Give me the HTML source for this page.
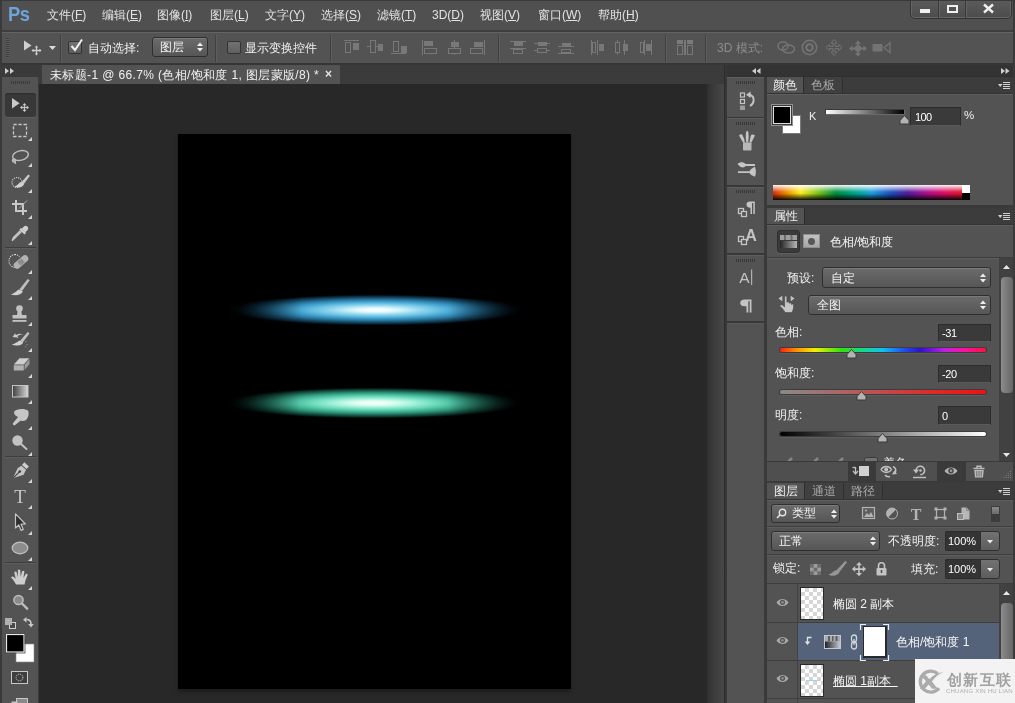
<!DOCTYPE html>
<html lang="zh">
<head>
<meta charset="utf-8">
<title>Photoshop</title>
<style>
*{box-sizing:border-box;margin:0;padding:0}
html,body{width:1015px;height:703px;overflow:hidden;background:#535353}
body{font-family:"Liberation Sans",sans-serif;font-size:12px;color:#e6e6e6;position:relative}
.a{position:absolute}
.t,.g,#tools,#stripicons,#filtericons{will-change:opacity}
.g{display:block;width:100%;height:100%}
.t{position:absolute;white-space:nowrap;line-height:14px;color:#e2e2e2}
svg{position:absolute;overflow:visible}
/* ---------- frame ---------- */
#menubar{left:0;top:0;width:1015px;height:32px;background:#505050;border-bottom:2px solid #3e3e3e}
#optbar{left:2px;top:32px;width:1012px;height:33px;background:#535353;border-top:1px solid #646464;border-bottom:2px solid #363636}
.vsep{position:absolute;top:35px;width:2px;height:27px;border-left:1px solid #3f3f3f;border-right:1px solid #5e5e5e}
.drop{position:absolute;border:1px solid #2f2f2f;border-radius:3px;background:linear-gradient(#6b6b6b,#565656);box-shadow:inset 0 1px 0 #7a7a7a}
.inp{position:absolute;background:#3a3a3a;border:1px solid #2c2c2c;border-bottom-color:#5a5a5a}
.grip{background:repeating-linear-gradient(90deg,#383838 0 1px,#535353 1px 2px)}
.chk{border:1px solid #2a2a2a;background-color:#fff;background-image:linear-gradient(45deg,#d6d6d6 25%,transparent 25%,transparent 75%,#d6d6d6 75%),linear-gradient(45deg,#d6d6d6 25%,transparent 25%,transparent 75%,#d6d6d6 75%);background-size:8px 8px;background-position:0 0,4px 4px}
.glow{-webkit-mask-image:linear-gradient(90deg,rgba(0,0,0,0) 3%,rgba(0,0,0,.55) 14%,#000 27%,#000 73%,rgba(0,0,0,.55) 86%,rgba(0,0,0,0) 97%);mask-image:linear-gradient(90deg,rgba(0,0,0,0) 3%,rgba(0,0,0,.55) 14%,#000 27%,#000 73%,rgba(0,0,0,.55) 86%,rgba(0,0,0,0) 97%)}
.tabrow{position:absolute;background:#3c3c3c;border-bottom:1px solid #333}
.tab{position:absolute;top:0;height:100%;background:#3c3c3c;border-right:1px solid #2e2e2e;color:#a8a8a8;text-align:center;line-height:16px;font-size:12px}
.tab.on{background:#535353;color:#f0f0f0}
</style>
</head>
<body>
<!-- window edges -->
<div class="a" style="left:0;top:0;width:2px;height:703px;background:#3a3a3a;z-index:50"></div>
<div class="a" style="left:1013px;top:0;width:2px;height:703px;background:#3a3a3a;z-index:50"></div>

<div class="a" style="left:0;top:0;width:1015px;height:1px;background:#3a3a3a;z-index:40"></div>
<!-- ================= MENU BAR ================= -->
<div id="menubar" class="a"></div>
<div class="t" style="left:8px;top:2px;font-size:21px;line-height:24px;font-weight:bold;color:#6ea4d8;letter-spacing:-0.5px;transform:scaleX(.875);transform-origin:0 0">Ps</div>
<div class="t" style="left:47px;top:8px">文件(<u>F</u>)</div>
<div class="t" style="left:102px;top:8px">编辑(<u>E</u>)</div>
<div class="t" style="left:157px;top:8px">图像(<u>I</u>)</div>
<div class="t" style="left:210px;top:8px">图层(<u>L</u>)</div>
<div class="t" style="left:265px;top:8px">文字(<u>Y</u>)</div>
<div class="t" style="left:321px;top:8px">选择(<u>S</u>)</div>
<div class="t" style="left:377px;top:8px">滤镜(<u>T</u>)</div>
<div class="t" style="left:432px;top:8px">3D(<u>D</u>)</div>
<div class="t" style="left:480px;top:8px">视图(<u>V</u>)</div>
<div class="t" style="left:538px;top:8px">窗口(<u>W</u>)</div>
<div class="t" style="left:598px;top:8px">帮助(<u>H</u>)</div>
<!-- window buttons -->
<div class="a" id="winbtn" style="left:910px;top:-2px;width:102px;height:21px;border:1px solid #333;border-radius:0 0 5px 5px;background:linear-gradient(#5c5c5c,#4c4c4c);box-shadow:inset 0 0 0 1px #666"></div>
<div class="a" style="left:938px;top:0;width:1px;height:18px;background:#3a3a3a"></div>
<div class="a" style="left:939px;top:0;width:1px;height:18px;background:#636363"></div>
<div class="a" style="left:965px;top:0;width:1px;height:18px;background:#3a3a3a"></div>
<div class="a" style="left:966px;top:0;width:1px;height:18px;background:#636363"></div>
<div class="a" style="left:920px;top:9px;width:10px;height:4px;background:#efefef"></div>
<div class="a" style="left:947px;top:5px;width:11px;height:8px;border:2px solid #efefef"></div>
<svg style="left:983px;top:4px" width="11" height="9" viewBox="0 0 11 9"><path d="M1 0.5 L10 8.5 M10 0.5 L1 8.5" stroke="#efefef" stroke-width="2.4" fill="none"/></svg>

<!-- ================= OPTIONS BAR ================= -->
<div id="optbar" class="a"></div>
<!-- grip -->
<div class="a" style="left:6px;top:38px;width:3px;height:20px;background:repeating-linear-gradient(#3d3d3d 0 1px,#5c5c5c 1px 2px)"></div>
<!-- move tool icon -->
<svg style="left:23px;top:40px" width="20" height="15" viewBox="0 0 20 15"><path d="M1 0.5 L1 10.5 L8.5 5.5 Z" fill="#cfcfcf"/><path d="M13.5 6.5v8M9.5 10.5h8" stroke="#cfcfcf" stroke-width="1.3" fill="none"/><path d="M13.5 5.5l-1.7 2h3.4zM13.5 15.5l-1.7-2h3.4zM8.5 10.5l2-1.7v3.4zM18.5 10.5l-2-1.7v3.4z" fill="#cfcfcf"/></svg>
<svg style="left:49px;top:46px" width="7" height="4" viewBox="0 0 7 4"><path d="M0 0h7l-3.5 4z" fill="#dcdcdc"/></svg>
<div class="vsep" style="left:60px"></div>
<!-- checkbox checked -->
<div class="a" style="left:68px;top:41px;width:14px;height:13px;border:1px solid #333;border-radius:2px;background:linear-gradient(#727272,#5c5c5c)"></div>
<svg style="left:69px;top:38px" width="15" height="15" viewBox="0 0 15 15"><path d="M2.5 8 L6 12 L13 1.5" stroke="#f0f0f0" stroke-width="2" fill="none"/></svg>
<div class="t" style="left:88px;top:41px;color:#f0f0f0">自动选择:</div>
<div class="drop" style="left:152px;top:37px;width:56px;height:20px"></div>
<div class="t" style="left:160px;top:40px;color:#f4f4f4">图层</div>
<svg style="left:197px;top:42px" width="6" height="10" viewBox="0 0 6 10"><path d="M0 4h6L3 0.5zM0 6h6L3 9.5z" fill="#eee"/></svg>
<div class="vsep" style="left:215px"></div>
<div class="a" style="left:227px;top:41px;width:14px;height:13px;border:1px solid #333;border-radius:2px;background:linear-gradient(#727272,#606060)"></div>
<div class="t" style="left:245px;top:41px;color:#f0f0f0">显示变换控件</div>
<div class="vsep" style="left:330px"></div>
<div class="vsep" style="left:498px"></div>
<div class="vsep" style="left:665px"></div>
<div class="vsep" style="left:705px"></div>
<div class="t" style="left:717px;top:41px;color:#8c8c8c">3D 模式:</div>
<!-- ALIGN ICONS -->
<svg style="left:0;top:0" width="1015" height="70" viewBox="0 0 1015 70" id="alignicons" shape-rendering="crispEdges">
<g fill="none" stroke="#787878" stroke-width="1">
<!-- 1 align top -->
<path d="M344 40.5h15"/><rect x="345.500" y="42.500" width="5" height="10"/><rect x="353" y="43" width="5" height="6" fill="#787878"/>
<!-- 2 align vcenter -->
<path d="M367 46.500h16"/><rect x="370.500" y="40.500" width="5" height="12" fill="#535353"/><rect x="378" y="44" width="4" height="6" fill="#787878"/>
<!-- 3 align bottom -->
<path d="M391 53.500h15"/><rect x="393.500" y="41.500" width="5" height="10"/><rect x="401" y="46" width="5" height="6" fill="#787878"/>
<!-- 4 align left -->
<path d="M422.500 40v15"/><rect x="424.500" y="41.500" width="8" height="4" fill="#787878"/><rect x="424.500" y="48.500" width="12" height="5"/>
<!-- 5 align hcenter -->
<path d="M454.500 40v15"/><rect x="451" y="42" width="7" height="4" fill="#787878"/><rect x="448.500" y="48.500" width="12" height="5" fill="#535353"/>
<!-- 6 align right -->
<path d="M484.500 40v15"/><rect x="474" y="42" width="8" height="4" fill="#787878"/><rect x="470.500" y="48.500" width="12" height="5"/>
<!-- 7 dist top -->
<path d="M510 41.500h16M510 48.500h16"/><rect x="514" y="42" width="8" height="3" fill="#787878"/><rect x="513.500" y="49.500" width="9" height="4"/>
<!-- 8 dist vcenter -->
<path d="M534 43.500h16M534 50.500h16"/><rect x="538" y="42" width="8" height="3" fill="#787878"/><rect x="537.500" y="48.500" width="9" height="4" fill="#535353"/>
<!-- 9 dist bottom -->
<path d="M558 46.500h16M558 53.500h16"/><rect x="562" y="43" width="8" height="3" fill="#787878"/><rect x="561.500" y="49.500" width="9" height="3"/>
<!-- 10 dist left -->
<path d="M591.500 40v15M597.500 40v15"/><rect x="592.500" y="42.500" width="3" height="10"/><rect x="599" y="44" width="4" height="6" fill="#787878"/>
<!-- 11 dist hcenter -->
<path d="M617.500 40v15M624.500 40v15"/><rect x="615.500" y="42.500" width="4" height="10" fill="#535353"/><rect x="623" y="44" width="4" height="6" fill="#787878"/>
<!-- 12 dist right -->
<path d="M644.500 40v15M651.500 40v15"/><rect x="640.500" y="42.500" width="3" height="10"/><rect x="646" y="44" width="4" height="6" fill="#787878"/>
<!-- 13 auto-align -->
<rect x="677.500" y="45.500" width="5" height="9"/><rect x="687.500" y="45.500" width="5" height="9"/>
<rect x="677" y="40" width="6" height="4" fill="#7a7a7a" stroke="none"/><rect x="687" y="40" width="6" height="4" fill="#7a7a7a" stroke="none"/>
<path d="M685 40v15" stroke-width="1.500"/>
</g>
</svg>
<!-- 3D icons -->
<svg style="left:774px;top:38px" width="120" height="20" viewBox="0 0 120 20">
<g fill="none" stroke="#747474" stroke-width="1.500">
<ellipse cx="9" cy="8" rx="5" ry="4"/><ellipse cx="14.500" cy="11" rx="6" ry="4"/>
<circle cx="35.500" cy="9.500" r="7.200"/><circle cx="35.500" cy="9.500" r="3.200" stroke-width="2"/>
<path d="M60 1.500l-3 3.500h2v3.500h-3.500v-2l-3.500 3 3.500 3v-2h3.500v3.500h-2l3 3.500 3-3.500h-2v-3.500h3.500v2l3.500-3-3.500-3v2h-3.500v-3.500h2z" stroke-width="1"/>
<path d="M84 4.500v12M77 10.500h14" stroke-width="1.800"/>
</g>
<g fill="#747474">
<circle cx="84" cy="10.500" r="3.300"/>
<path d="M84 2.500l-3 3.500h6zM84 18.500l-3-3.500h6zM75 10.500l3.500-3v6zM93 10.500l-3.500-3v6z"/>
<rect x="98.500" y="6" width="10" height="7.500" rx="1"/><path d="M110 9.700l6-5v10z" fill="none" stroke="#747474" stroke-width="1.300"/>
</g>
</svg>

<!-- ================= DOCUMENT AREA ================= -->
<div class="a" id="docarea" style="left:39px;top:65px;width:688px;height:638px;background:#282828"></div>
<div class="a" id="doctabbar" style="left:39px;top:65px;width:686px;height:19px;background:#3b3b3b"></div>
<div class="a" id="doctab" style="left:42px;top:65px;width:298px;height:19px;background:#535353"></div>
<div class="t" style="left:50px;top:68px;color:#f0f0f0;letter-spacing:0.360px">未标题-1 @ 66.7% (色相/饱和度 1, 图层蒙版/8) *</div>
<div class="t" style="left:325px;top:67px;color:#e4e4e4;font-size:12px;font-weight:bold">×</div>
<!-- canvas document -->
<div class="a" id="doc" style="left:178px;top:134px;width:393px;height:555px;background:#000;box-shadow:0 3px 4px rgba(0,0,0,.3)"></div>
<div class="a glow" style="left:216px;top:286px;width:320px;height:48px;background:radial-gradient(ellipse 150px 15.500px at 50% 50%,#f8ffff 0%,#eefcff 9%,#d2f2fb 17%,#98d9f0 29%,#66bfe2 42%,#3f9cc8 55%,#2a78a2 67%,#164c6a 79%,#0a2a3c 89%,#020c12 96%,rgba(0,0,0,0) 100%)"></div>
<div class="a glow" style="left:214px;top:379px;width:320px;height:48px;background:radial-gradient(ellipse 150px 15.500px at 50% 50%,#f8fffc 0%,#ecfff7 9%,#d0fbea 17%,#9cefd6 29%,#6cdabb 42%,#48b89a 55%,#2e9276 67%,#195e4c 79%,#0b342a 89%,#020f0c 96%,rgba(0,0,0,0) 100%)"></div>
<!-- vertical scrollbar -->
<div class="a" style="left:707px;top:84px;width:17px;height:619px;background:linear-gradient(90deg,#303030,#3c3c3c 40%,#474747);border-radius:3px 0 0 0"></div>
<div class="a" style="left:724px;top:65px;width:3px;height:638px;background:#373737;border-left:1px solid #2c2c2c"></div>

<!-- ================= TOOLBOX ================= -->
<div class="a" id="toolbox" style="left:2px;top:65px;width:37px;height:638px;background:#535353;border-right:1px solid #3a3a3a"></div>
<div class="a" style="left:2px;top:65px;width:37px;height:12px;background:#3a3a3a"></div>
<!-- toolbox: collapse arrows, grip, selected btn -->
<svg style="left:5px;top:68px" width="10" height="6" viewBox="0 0 10 6"><path d="M0 0l4 3-4 3zM5 0l4 3-4 3z" fill="#d0d0d0"/></svg>
<div class="a" style="left:11px;top:81px;width:19px;height:3px;background:repeating-linear-gradient(90deg,#3a3a3a 0 1px,#535353 1px 2px)"></div>
<div class="a" style="left:5px;top:93px;width:31px;height:24px;background:#383838;border-radius:3px;box-shadow:inset 0 1px 1px #2c2c2c,0 1px 0 #5e5e5e"></div>
<svg id="tools" style="left:0;top:0" width="42" height="703" viewBox="0 0 42 703">
<defs>
<linearGradient id="gr1" x1="0" y1="0" x2="1" y2="0"><stop offset="0" stop-color="#3e3e3e"/><stop offset="1" stop-color="#d8d8d8"/></linearGradient>
<pattern id="chk" width="4" height="4" patternUnits="userSpaceOnUse"><rect width="4" height="4" fill="#fff"/><rect width="2" height="2" fill="#ccc"/><rect x="2" y="2" width="2" height="2" fill="#ccc"/></pattern>
</defs>
<g fill="#c8c8c8">
<!-- flyout triangles -->
<path d="M32 137v4h-4zM32 163v4h-4zM32 189v4h-4zM32 215v4h-4zM32 241v4h-4zM32 270v4h-4zM32 296v4h-4zM32 322v4h-4zM32 348v4h-4zM32 374v4h-4zM32 400v4h-4zM32 426v4h-4zM32 452v4h-4zM32 479v4h-4zM32 505v4h-4zM32 531v4h-4zM32 557v4h-4zM32 586v4h-4z" fill="#d6d6d6"/>
<!-- move -->
<path d="M12 98v10.500l7.600-5.200z"/>
<path d="M24.500 103l2 2.300h-1.400v1.600h1.600v-1.400l2.300 2-2.300 2v-1.400h-1.600v1.600h1.400l-2 2.300-2-2.300h1.400v-1.600h-1.600v1.400l-2.300-2 2.300-2v1.400h1.600v-1.600h-1.400z"/>
</g>
<!-- marquee -->
<rect x="13.500" y="124.500" width="13" height="12" fill="none" stroke="#c8c8c8" stroke-width="1.300" stroke-dasharray="3.200 1.800"/>
<!-- lasso -->
<g fill="none" stroke="#bebebe" stroke-width="1.450">
<ellipse cx="20.500" cy="155.500" rx="8" ry="4.800" transform="rotate(-14 20.500 155.500)"/>
<path d="M13.500 159.500c0.500 2 2 2.500 2 4.500" stroke-width="1.500"/>
<circle cx="14" cy="160.500" r="1.600" stroke-width="1.200"/>
</g>
<!-- quick select -->
<circle cx="17" cy="182.500" r="5" fill="none" stroke="#dadada" stroke-width="1.100" stroke-dasharray="1.100 1.100"/>
<path d="M30 175.800l-1.800-1.300-6.800 7.800 2.300 1.900z" fill="#c8c8c8"/>
<path d="M21 182c-2.200 0.700-2.800 3.200-6.800 4.600 3.400 1.900 8.600 1 10-2.600z" fill="#d2d2d2"/>
<!-- crop -->
<g fill="none" stroke="#c8c8c8" stroke-width="2">
<path d="M16 200v11h11M12 204h11v11"/>
</g>
<path d="M27 200.500l-8 8" stroke="#b0b0b0" stroke-width="1" fill="none"/>
<!-- eyedropper -->
<g>
<path d="M24.200 226.200a2.600 2.600 0 0 1 3.600 3.600l-2.600 2.600-3.600-3.600z" fill="#d0d0d0"/>
<path d="M20.200 228.800l5 5" stroke="#d0d0d0" stroke-width="2.200"/>
<path d="M21.500 231.500l-7.200 7.200-1.600 0.600 0.600-1.600 7.200-7.200" fill="none" stroke="#c8c8c8" stroke-width="1.300"/>
<path d="M12.200 240.800l1.500-2" stroke="#c8c8c8" stroke-width="1.200"/>
</g>
<!-- sep1 -->
<path d="M5 247.500h31" stroke="#3d3d3d" stroke-width="1"/><path d="M5 248.500h31" stroke="#5d5d5d" stroke-width="1"/>
<!-- healing brush -->
<path d="M15 254.500a6 6.500 0 0 0 0 13" fill="none" stroke="#dadada" stroke-width="1.100" stroke-dasharray="1.100 1.100"/>
<path d="M15 254.500a6 6.500 0 0 1 4.500 2.200" fill="none" stroke="#dadada" stroke-width="1.100" stroke-dasharray="1.100 1.100"/>
<rect x="12.500" y="258.600" width="17" height="6.800" rx="3.400" transform="rotate(-40 21 262)" fill="#b2b2b2"/>
<rect x="18.300" y="259.300" width="5.400" height="5.400" transform="rotate(-40 21 262)" fill="#8e8e8e"/>
<!-- brush -->
<path d="M29.700 280.300l-2-1.300-8.200 10.300 2.500 1.800z" fill="#c0c0c0"/>
<path d="M19.200 289.500c-2.400 0.600-3 3.400-8.400 4.700 3.800 2 10.400 1.200 12-2.700z" fill="#d0d0d0"/>
<!-- stamp -->
<g fill="#c2c2c2">
<circle cx="19.500" cy="308.500" r="3.300"/>
<path d="M17.800 310h3.400l0.800 5.500h-5z"/>
<rect x="12.500" y="315" width="14" height="3.600" rx="0.600"/>
<rect x="12.500" y="320" width="14" height="1.800"/>
</g>
<!-- history brush -->
<path d="M29.600 333.300l-1.900-1.300-7.400 8.600 2.400 1.800z" fill="#c0c0c0"/>
<path d="M20 340.600c-2.400 0.600-3 2.800-8.400 4 3.800 1.800 10 1.200 11.600-2.200z" fill="#d0d0d0"/>
<path d="M12.500 337l2.500-3.500 1.200 1.400c2.500-1.500 5-1.500 7-0.300-2.500-0.200-4.300 0.400-5.800 1.700l1.300 1.400z" fill="#c8c8c8"/>
<path d="M26 341v1.200M27 344v1.200M25.500 346.500v0.800" stroke="#9a9a9a" stroke-width="1"/>
<!-- eraser -->
<path d="M19.500 358.200h9.800l-5.500 6.300h-10z" fill="#cdcdcd"/>
<path d="M13.800 365.300h10v5.200h-10z" fill="#b0b0b0"/>
<path d="M24.600 364.800l4.900-5.800v5l-4.900 6z" fill="#9a9a9a"/>
<!-- gradient -->
<rect x="12.500" y="385.500" width="15.500" height="11.500" fill="url(#gr1)" stroke="#c4c4c4" stroke-width="1"/>
<!-- smudge -->
<path d="M14.200 411.500c2-3 10.500-3.500 14-0.800 1 3.200 0.300 7.200-2.600 9.600-1.600 1-3.200 1-4.800 0.200l-5.600 4.600c-1.300 1-3.200-0.600-2.100-2l5-6.200c-3-1-4.500-3.200-3.900-5.400z" fill="#c6c6c6"/>
<!-- dodge -->
<circle cx="17.500" cy="440.500" r="5.200" fill="#c2c2c2"/>
<path d="M20.500 443.500l6 5.500" stroke="#c2c2c2" stroke-width="2" stroke-linecap="round"/>
<!-- sep2 -->
<path d="M5 456.500h31" stroke="#3d3d3d" stroke-width="1"/><path d="M5 457.500h31" stroke="#5d5d5d" stroke-width="1"/>
<!-- pen -->
<path d="M24.300 462.300l4.600 4.200-2.200 2.600-4.700-4.200z" fill="#cfcfcf"/>
<path d="M21.400 465.700l4.600 4.100-2.400 5-10.800 3.400 5-10.300z" fill="#c4c4c4"/>
<path d="M13.200 477.800l6.300-6" stroke="#3c3c3c" stroke-width="1.100"/>
<circle cx="19.800" cy="471.500" r="1.300" fill="#3c3c3c"/>
<!-- T -->
<text x="20" y="503.300" font-family="Liberation Serif, serif" font-size="19" text-anchor="middle" fill="#c8c8c8">T</text>
<!-- path selection arrow -->
<path d="M15.500 513.800v14.200l3.300-3 2.300 5.400 2.200-1-2.300-5.200 4.400-0.200z" fill="#2e2e2e" stroke="#c4c4c4" stroke-width="1.200" stroke-linejoin="round"/>
<!-- ellipse -->
<ellipse cx="20" cy="548" rx="7.800" ry="5.800" fill="#8c8c8c" stroke="#c4c4c4" stroke-width="1.200"/>
<!-- sep3 -->
<path d="M5 562.500h31" stroke="#3d3d3d" stroke-width="1"/><path d="M5 563.500h31" stroke="#5d5d5d" stroke-width="1"/>
<!-- hand -->
<path d="M16 584.500c-1.200-2.500-3-5-5-7 0.600-1.300 2-1.300 3-0.300l1.700 1.800-1.400-6.500c0.400-1.200 1.800-1.200 2.300-0.200l1.400 5-0.200-7c0.500-1.200 2-1.200 2.500 0l0.400 6.800 1.400-5.800c0.600-1 2-0.800 2.300 0.300l-1 6.400 2.200-3.800c0.800-0.800 2-0.300 2 0.800l-2.300 6c-0.300 1.300-0.600 2.600-0.800 3.500z" fill="#cdcdcd"/>
<!-- zoom -->
<circle cx="18.500" cy="600" r="4.600" fill="#8a8a8a" stroke="#bebebe" stroke-width="1.500"/>
<path d="M22 603.500l5.200 5.200" stroke="#bebebe" stroke-width="2.400" stroke-linecap="round"/>
<!-- default colors -->
<rect x="9.500" y="622.500" width="6" height="6" fill="#4a4a4a" stroke="#cfcfcf" stroke-width="1"/>
<rect x="5" y="618" width="7" height="7" fill="#b0b0b0"/>
<!-- swap -->
<path d="M26.500 619.500c3 0 4.500 1.500 4.500 4.500" fill="none" stroke="#c8c8c8" stroke-width="1.600"/>
<path d="M23 619.800l3.500-2.800v5.600zM31 627.500l-2.800-3.500h5.600z" fill="#c8c8c8"/>
<!-- fg/bg -->
<rect x="16" y="644" width="18" height="18" fill="#fff" stroke="#8a8a8a" stroke-width="0.600"/>
<rect x="6.500" y="634.500" width="17.500" height="17.500" fill="#000" stroke="#e8e8e8" stroke-width="1.200"/>
<rect x="5.500" y="633.500" width="19.500" height="19.500" fill="none" stroke="#4a4a4a" stroke-width="0.800"/>
<!-- quick mask -->
<rect x="11.500" y="671.500" width="16" height="12" fill="#3e3e3e" stroke="#c8c8c8" stroke-width="1"/>
<circle cx="19.500" cy="677.500" r="3.400" fill="none" stroke="#e0e0e0" stroke-width="1" stroke-dasharray="1 1"/>
<!-- screen mode -->
<rect x="16.500" y="698.500" width="11" height="8" fill="#8a8a8a" stroke="#c8c8c8" stroke-width="1"/>
<rect x="11.500" y="701.500" width="6" height="5" fill="#c8c8c8"/>
</svg>

<!-- ================= ICON STRIP ================= -->
<div class="a" id="iconstrip" style="left:727px;top:65px;width:38px;height:638px;background:#535353"></div>
<div class="a" style="left:727px;top:65px;width:288px;height:12px;background:#3a3a3a"></div>
<div class="a" style="left:764px;top:77px;width:3px;height:626px;background:#3a3a3a"></div>
<div class="a" style="left:727px;top:65px;width:286px;height:11px;background:#333"></div>
<div class="a" style="left:727px;top:76px;width:286px;height:1px;background:#2f2f2f"></div>
<!-- icon strip contents -->
<div class="a" style="left:727px;top:117px;width:37px;height:1px;background:#383838"></div>
<div class="a" style="left:727px;top:118px;width:37px;height:1px;background:#5e5e5e"></div>
<div class="a" style="left:727px;top:185px;width:37px;height:2px;background:#383838"></div>
<div class="a" style="left:727px;top:187px;width:37px;height:1px;background:#5e5e5e"></div>
<div class="a" style="left:727px;top:253px;width:37px;height:2px;background:#383838"></div>
<div class="a" style="left:727px;top:255px;width:37px;height:1px;background:#5e5e5e"></div>
<div class="a" style="left:727px;top:321px;width:37px;height:2px;background:#383838"></div>
<div class="a" style="left:727px;top:323px;width:37px;height:1px;background:#5a5a5a"></div>
<div class="a" style="left:727px;top:77px;width:37px;height:1px;background:#5e5e5e"></div>
<div class="a grip" style="left:736px;top:81px;width:19px;height:3px"></div>
<div class="a grip" style="left:736px;top:122px;width:19px;height:3px"></div>
<div class="a grip" style="left:736px;top:190px;width:19px;height:3px"></div>
<div class="a grip" style="left:736px;top:259px;width:19px;height:3px"></div>
<svg style="left:752px;top:68px" width="9" height="6" viewBox="0 0 9 6"><path d="M4 0v6l-4-3zM8.500 0v6l-4-3z" fill="#d0d0d0"/></svg>
<svg style="left:1001px;top:68px" width="9" height="6" viewBox="0 0 9 6"><path d="M0 0v6l4-3zM4.500 0v6l4-3z" fill="#d0d0d0"/></svg>
<svg id="stripicons" style="left:727px;top:65px" width="38" height="270" viewBox="727 65 38 270">
<g fill="#c4c4c4">
<!-- history -->
<rect x="740.500" y="93" width="4" height="4" fill="none" stroke="#c4c4c4" stroke-width="1.200"/>
<rect x="740.500" y="99.500" width="4" height="4" fill="none" stroke="#c4c4c4" stroke-width="1.200"/>
<rect x="740" y="105.500" width="5" height="4.500" fill="#9c9c9c"/>
<path d="M749 94.800c3.600 0.200 5 3 4.600 6-0.300 2.300-1.600 4-3.600 5.200" fill="none" stroke="#c4c4c4" stroke-width="2"/>
<path d="M746 94.800l4.600-3.400v6.600z"/>
<!-- brush presets -->
<rect x="743" y="142.500" width="8.500" height="8" rx="0.800" fill="#b8b8b8"/>
<path d="M746 132l1.200-1.200 1.200 1.200 0.300 5-0.600 5.500h-1.800l-0.600-5.500z"/>
<path d="M739 135.500c1.200-1.200 2.200-1.600 3-1.200l2.300 5 0.500 3.500h-1.600z"/>
<path d="M755 135.500c-2-1.400-3.500-1.200-4.300 0.500l-1.200 6.500h1.800z"/>
<!-- brush panel -->
<path d="M737.500 164c2-1.800 5.300-2.200 7.200-0.800l1 0.900h9.300v1.900h-9.300c-1.500 2.200-5 2.200-8.200-2z"/>
<path d="M738 171.200h11.500c0.800-2 3.500-4 5.500-4.500 1.200 3.300 1.200 6.700 0 10-2.300-0.600-4.600-2-5.500-3.600h-11.500z"/>
<!-- paragraph styles -->
<path d="M749.800 201.500h5v12.500h-1.500v-11h-1.300v11h-1.500v-6.300c-2.800 0-4-1.300-4-3.200 0-1.800 1.300-3 3.300-3z"/>
<rect x="738.500" y="208.500" width="5" height="5" fill="#535353" stroke="#c4c4c4" stroke-width="1.300"/>
<rect x="741.500" y="211.500" width="5" height="5" fill="#535353" stroke="#c4c4c4" stroke-width="1.300"/>
<!-- character styles -->
<text x="751" y="241" font-family="Liberation Sans, sans-serif" font-size="16" font-weight="bold" text-anchor="middle">A</text>
<rect x="738.500" y="236.500" width="5" height="5" fill="#535353" stroke="#c4c4c4" stroke-width="1.300"/>
<rect x="741.500" y="239.500" width="5" height="5" fill="#535353" stroke="#c4c4c4" stroke-width="1.300"/>
<!-- character -->
<text x="744.500" y="283" font-family="Liberation Sans, sans-serif" font-size="15.500" text-anchor="middle">A</text>
<rect x="751" y="269.500" width="1.200" height="15.500" fill="#b0b0b0"/>
<!-- paragraph -->
<path d="M744.500 299.500h7v13h-1.800v-11.200h-1.400v11.200h-1.800v-6.300h-2c-2.600 0-4.300-1.300-4.300-3.300 0-2 1.700-3.400 4.300-3.400z"/>
</g>
</svg>

<!-- ================= RIGHT PANELS ================= -->
<div class="a" id="rp" style="left:767px;top:77px;width:246px;height:626px;background:#535353"></div>
<!-- ===== COLOR PANEL ===== -->
<div class="tabrow" style="left:767px;top:77px;width:246px;height:17px">
  <div class="tab on" style="left:0;width:37px"><span class="g">颜色</span></div>
  <div class="tab" style="left:37px;width:39px;background:#404040"><span class="g">色板</span></div>
</div>
<svg class="pmenu" style="left:998px;top:82px" width="12" height="8" viewBox="0 0 12 8"><path d="M0 2h4.500l-2.250 3z" fill="#cfcfcf"/><path d="M5 0.500h7M5 2.500h7M5 4.500h7M5 6.500h7" stroke="#cfcfcf" stroke-width="1"/></svg>
<div class="a" style="left:767px;top:94px;width:246px;height:1px;background:#5f5f5f"></div>
<!-- fg/bg swatches -->
<div class="a" style="left:782px;top:115px;width:19px;height:19px;background:#fff;border:1px solid #7a7a7a"></div>
<div class="a" style="left:771px;top:104px;width:22px;height:22px;background:#000;border:1px solid #8f8f8f;box-shadow:inset 0 0 0 1px #3c3c3c,inset 0 0 0 2px #dcdcdc"></div>
<div class="t" style="left:809px;top:109px;color:#f0f0f0;font-size:11px">K</div>
<div class="a" style="left:825px;top:109px;width:80px;height:6px;background:linear-gradient(90deg,#fff,#000);border:1px solid #333;border-color:#3a3a3a #6a6a6a #6a6a6a #3a3a3a"></div>
<svg style="left:899px;top:115px" width="11" height="10" viewBox="0 0 11 10"><path d="M5.500 0.500l4.500 5v3.500h-9v-3.500z" fill="#b4b4b4" stroke="#3a3a3a" stroke-width="1"/></svg>
<div class="inp" style="left:910px;top:107px;width:51px;height:19px"></div>
<div class="t" style="left:915px;top:110px;color:#fff;font-size:11px;letter-spacing:-0.600px">100</div>
<div class="t" style="left:964px;top:108px;color:#f0f0f0;font-size:11.500px">%</div>
<!-- spectrum -->
<div class="a" style="left:773px;top:185px;width:197px;height:15px;background:linear-gradient(90deg,#e02a10 0%,#f0a000 8%,#ffee20 14%,#70c020 24%,#009040 32%,#00a890 42%,#20a0e0 50%,#2050c0 60%,#5020a0 68%,#b01090 78%,#e01060 88%,#e01828 96%,#e02010 100%)"></div>
<div class="a" style="left:773px;top:185px;width:197px;height:15px;background:linear-gradient(180deg,rgba(255,255,255,.95) 0%,rgba(255,255,255,0) 48%,rgba(0,0,0,0) 55%,rgba(0,0,0,.95) 100%)"></div>
<div class="a" style="left:962px;top:185px;width:8px;height:8px;background:#fff"></div>
<div class="a" style="left:962px;top:193px;width:8px;height:7px;background:#000"></div>
<div class="a" style="left:767px;top:205px;width:246px;height:3px;background:#3a3a3a"></div>

<!-- ===== PROPERTIES PANEL ===== -->
<div class="tabrow" style="left:767px;top:208px;width:246px;height:17px">
  <div class="tab on" style="left:0;width:38px"><span class="g">属性</span></div>
</div>
<svg class="pmenu" style="left:998px;top:213px" width="12" height="8" viewBox="0 0 12 8"><path d="M0 2h4.500l-2.250 3z" fill="#cfcfcf"/><path d="M5 0.500h7M5 2.500h7M5 4.500h7M5 6.500h7" stroke="#cfcfcf" stroke-width="1"/></svg>
<div class="a" style="left:767px;top:225px;width:246px;height:1px;background:#5f5f5f"></div>
<!-- adj icons -->
<div class="a" style="left:777px;top:230px;width:23px;height:23px;background:#3a3a3a;border:1px solid #303030;border-radius:3px;box-shadow:0 1px 0 #606060"></div>
<svg style="left:780px;top:235px" width="17" height="13" viewBox="0 0 17 13"><defs><linearGradient id="hs1" x1="0" y1="0" x2="1" y2="0"><stop offset="0" stop-color="#262626"/><stop offset="1" stop-color="#b4b4b4"/></linearGradient></defs><rect x="0" y="0" width="17" height="5" fill="#9e9e9e"/><rect x="4" y="0" width="2" height="5" fill="#6c6c6c"/><rect x="10.500" y="0" width="2" height="5" fill="#6c6c6c"/><rect x="0" y="6" width="17" height="7" fill="url(#hs1)"/></svg>
<div class="a" style="left:803px;top:234px;width:17px;height:14px;background:linear-gradient(#c2c2c2,#a6a6a6);border:1px solid #8e8e8e"></div>
<div class="a" style="left:808px;top:238px;width:7px;height:7px;border-radius:50%;background:#585858"></div>
<div class="t" style="left:830px;top:235px;color:#f4f4f4">色相/饱和度</div>
<div class="a" style="left:767px;top:257px;width:246px;height:1px;background:#3c3c3c"></div>
<div class="a" style="left:767px;top:258px;width:233px;height:1px;background:#5f5f5f"></div>
<!-- preset row -->
<div class="t" style="left:787px;top:271px;color:#f0f0f0">预设:</div>
<div class="drop" style="left:822px;top:267px;width:169px;height:21px"></div>
<div class="t" style="left:831px;top:271px;color:#f4f4f4">自定</div>
<svg style="left:980px;top:273px" width="6" height="10" viewBox="0 0 6 10"><path d="M0 4h6L3 0.500zM0 6h6L3 9.500z" fill="#eee"/></svg>
<!-- hand + channel -->
<svg style="left:778px;top:295px" width="18" height="19" viewBox="0 0 18 19"><path d="M0.500 3.500l3.800-2.700v5.400zM16.500 3.500l-3.800-2.700v5.400z" fill="#c6c6c6"/><path d="M6.600 2c0-1.500 2.300-1.500 2.300 0v5.300c0.500-0.900 2.200-0.800 2.300 0.300v0.700c0.500-0.800 2.100-0.700 2.200 0.400v0.800c0.600-0.700 2.100-0.500 2.200 0.500 0.200 2.600-0.400 5.200-1.700 7.600h-6.800c-1.100-2.500-3-4.700-5.400-6.700 0.600-1.400 2.200-1.500 3.200-0.500l1.700 1.500z" fill="#c6c6c6" stroke="#444" stroke-width="0.600"/></svg>
<div class="drop" style="left:808px;top:295px;width:183px;height:20px"></div>
<div class="t" style="left:817px;top:298px;color:#f4f4f4">全图</div>
<svg style="left:980px;top:300px" width="6" height="10" viewBox="0 0 6 10"><path d="M0 4h6L3 0.500zM0 6h6L3 9.500z" fill="#eee"/></svg>
<!-- hue -->
<div class="t" style="left:775px;top:325px;color:#f0f0f0">色相:</div>
<div class="inp" style="left:938px;top:324px;width:53px;height:18px"></div>
<div class="t" style="left:942px;top:326px;color:#fff;font-size:11px;letter-spacing:-0.400px">-31</div>
<div class="a" style="left:780px;top:348px;width:206px;height:3.500px;border-radius:2px;background:linear-gradient(90deg,#ff2010 0%,#ff9000 8%,#f0f000 17%,#30e010 30%,#10d8a0 42%,#10c0f0 50%,#2050f0 60%,#3010d0 68%,#c020e0 80%,#ff10a0 90%,#ff1040 100%);box-shadow:0 0 0 1px #3c3c3c,0 2px 0 0 #5e5e5e"></div>
<svg class="thumb" style="left:846px;top:349px" width="11" height="10" viewBox="0 0 11 10"><path d="M5.500 0.500l4.500 5v3.500h-9v-3.500z" fill="#b4b4b4" stroke="#3a3a3a" stroke-width="1"/></svg>
<!-- saturation -->
<div class="t" style="left:775px;top:366px;color:#f0f0f0">饱和度:</div>
<div class="inp" style="left:938px;top:365px;width:53px;height:18px"></div>
<div class="t" style="left:942px;top:367px;color:#fff;font-size:11px;letter-spacing:-0.400px">-20</div>
<div class="a" style="left:780px;top:390px;width:206px;height:3.500px;border-radius:2px;background:linear-gradient(90deg,#8a8a8a 0%,#b06060 35%,#d83030 70%,#f01010 100%);box-shadow:0 0 0 1px #3c3c3c,0 2px 0 0 #5e5e5e"></div>
<svg class="thumb" style="left:856px;top:391px" width="11" height="10" viewBox="0 0 11 10"><path d="M5.500 0.500l4.500 5v3.500h-9v-3.500z" fill="#b4b4b4" stroke="#3a3a3a" stroke-width="1"/></svg>
<!-- lightness -->
<div class="t" style="left:775px;top:408px;color:#f0f0f0">明度:</div>
<div class="inp" style="left:938px;top:406px;width:53px;height:19px"></div>
<div class="t" style="left:942px;top:409px;color:#fff;font-size:11px">0</div>
<div class="a" style="left:780px;top:432px;width:206px;height:3.500px;border-radius:2px;background:linear-gradient(90deg,#000 0%,#fff 100%);box-shadow:0 0 0 1px #3c3c3c,0 2px 0 0 #5e5e5e"></div>
<svg class="thumb" style="left:877px;top:433px" width="11" height="10" viewBox="0 0 11 10"><path d="M5.500 0.500l4.500 5v3.500h-9v-3.500z" fill="#b4b4b4" stroke="#3a3a3a" stroke-width="1"/></svg>
<!-- cut-off row (eyedroppers + colorize) -->
<div class="a" style="left:767px;top:452px;width:233px;height:9px;overflow:hidden">
  <svg style="left:16px;top:2px" width="140" height="14" viewBox="0 0 140 14"><g stroke="#868686" stroke-width="2.600" fill="none"><path d="M3 10l6-6"/><path d="M29 10l6-6"/><path d="M54 10l6-6"/></g><rect x="81.500" y="3.500" width="13" height="12" rx="2" fill="#727272" stroke="#3a3a3a"/></svg>
  <div class="t" style="left:116px;top:4px;color:#f0f0f0">着色</div>
</div>
<!-- properties scrollbar -->
<div class="a" style="left:999px;top:258px;width:14px;height:203px;background:#414141"></div>
<svg style="left:1003px;top:265px" width="7" height="4" viewBox="0 0 7 4"><path d="M0 4h7L3.500 0z" fill="#e6e6e6"/></svg>
<svg style="left:1003px;top:453px" width="7" height="4" viewBox="0 0 7 4"><path d="M0 0h7L3.500 4z" fill="#e6e6e6"/></svg>
<div class="a" style="left:1001px;top:277px;width:12px;height:116px;border-radius:4px;background:linear-gradient(90deg,#8c8c8c,#747474 60%,#686868)"></div>
<!-- properties bottom bar -->
<div class="a" style="left:767px;top:461px;width:246px;height:20px;background:#4f4f4f;border-top:1px solid #3a3a3a"></div>
<div class="a" style="left:848px;top:462px;width:28px;height:19px;background:#3a3a3a"></div>
<div class="a" style="left:937px;top:462px;width:29px;height:19px;background:#3a3a3a"></div>
<svg id="propbtns" style="left:848px;top:462px" width="160" height="19" viewBox="848 462 160 19">
<g fill="#c2c2c2">
<path d="M855.500 467v6.500M853 471l2.500 3 2.500-3" fill="none" stroke="#c0c0c0" stroke-width="1.300"/>
<path d="M852.500 467.500h3" stroke="#c0c0c0" stroke-width="1.300"/>
<rect x="859" y="466" width="10" height="10" fill="#cfcfcf"/>
<!-- eye w/ arrow -->
<path d="M881 469.500c2.500-4 8-4 10.500 0-2.500 4-8 4-10.500 0z" fill="none" stroke="#c0c0c0" stroke-width="1.400"/><circle cx="886.200" cy="469.500" r="2"/>
<path d="M893 466.500c2.500 1 3.400 3.400 2.300 5.800" fill="none" stroke="#c0c0c0" stroke-width="1.500"/><path d="M892 474.500l5-0.500-2.500-3.800z"/>
<path d="M890 476.500c-2 0.600-4 0-5-1.500" fill="none" stroke="#c0c0c0" stroke-width="1.400"/>
<!-- reset -->
<path d="M916 470.500a4.300 4.300 0 1 1 4.300 4.300" fill="none" stroke="#c0c0c0" stroke-width="1.600"/><path d="M913 469.500l6 0-3 4z"/>
<path d="M913 477.500h13" stroke="#c0c0c0" stroke-width="1.400"/>
<circle cx="920.500" cy="470.500" r="1.200"/>
<!-- eye -->
<path d="M944.500 471c3-4.600 10-4.600 13 0-3 4.600-10 4.600-13 0z" fill="#b4b4b4"/><circle cx="951" cy="470.800" r="2.800" fill="#484848"/><circle cx="951" cy="470.800" r="1.300" fill="#9a9a9a"/>
<!-- trash -->
<path d="M973.500 468.500h11M977 468v-1.800h4v1.800" fill="none" stroke="#bcbcbc" stroke-width="1.400"/>
<path d="M974.300 470h9.400l-0.700 7.500h-8z" fill="#bcbcbc"/>
<path d="M976.800 471v5.500M979 471v5.500M981.200 471v5.500" stroke="#555" stroke-width="0.800"/>
</g>
</svg>
<div class="a" style="left:1002px;top:469px;width:10px;height:10px;background:repeating-linear-gradient(90deg,transparent 0 1px,#4f4f4f 1px 2px),repeating-linear-gradient(#777 0 1px,#4f4f4f 1px 2px);clip-path:polygon(100% 0,100% 100%,0 100%)"></div>
<div class="a" style="left:767px;top:481px;width:246px;height:2px;background:#3a3a3a"></div>
<!-- ===== LAYERS PANEL ===== -->
<div class="tabrow" style="left:767px;top:483px;width:246px;height:17px">
  <div class="tab on" style="left:0;width:38px"><span class="g">图层</span></div>
  <div class="tab" style="left:38px;width:39px;background:#404040"><span class="g">通道</span></div>
  <div class="tab" style="left:77px;width:39px;background:#404040"><span class="g">路径</span></div>
</div>
<svg class="pmenu" style="left:998px;top:488px" width="12" height="8" viewBox="0 0 12 8"><path d="M0 2h4.500l-2.250 3z" fill="#cfcfcf"/><path d="M5 0.500h7M5 2.500h7M5 4.500h7M5 6.500h7" stroke="#cfcfcf" stroke-width="1"/></svg>
<div class="a" style="left:767px;top:500px;width:246px;height:1px;background:#5f5f5f"></div>
<!-- filter row -->
<div class="drop" style="left:771px;top:504px;width:69px;height:19px"></div>
<svg style="left:776px;top:508px" width="11" height="11" viewBox="0 0 11 11"><circle cx="6.500" cy="4.500" r="3.200" fill="none" stroke="#e4e4e4" stroke-width="1.400"/><path d="M4.200 6.800l-3.200 3.200" stroke="#e4e4e4" stroke-width="1.600"/></svg>
<div class="t" style="left:792px;top:506px;color:#f4f4f4">类型</div>
<svg style="left:831px;top:509px" width="6" height="10" viewBox="0 0 6 10"><path d="M0 4h6L3 0.500zM0 6h6L3 9.500z" fill="#eee"/></svg>
<svg id="filtericons" style="left:858px;top:503px" width="115" height="22" viewBox="858 503 115 22">
<g fill="#b2b2b2">
<rect x="862.500" y="507.500" width="12" height="11" fill="#5e5e5e" stroke="#b2b2b2" stroke-width="1.200"/>
<path d="M864 517l3-4 2 2 2-3 2.500 5z"/><circle cx="866" cy="510.500" r="1"/>
<circle cx="892" cy="513.500" r="5.500" fill="#b2b2b2"/><path d="M888 517.500a5.500 5.500 0 0 0 7.800-7.800z" fill="#535353"/>
<circle cx="892" cy="513.500" r="5.500" fill="none" stroke="#b2b2b2" stroke-width="1"/>
<text x="916" y="519.500" font-family="Liberation Serif, serif" font-weight="bold" font-size="16" text-anchor="middle">T</text>
<rect x="936.500" y="509.500" width="8" height="8" fill="none" stroke="#b2b2b2" stroke-width="1.200"/>
<rect x="934.500" y="507.500" width="3" height="3"/><rect x="943.500" y="507.500" width="3" height="3"/><rect x="934.500" y="516.500" width="3" height="3"/><rect x="943.500" y="516.500" width="3" height="3"/>
<path d="M961.500 507.500h5l3 3v9h-8z" fill="#b8b8b8"/><path d="M966.500 507.500v3h3" fill="none" stroke="#777" stroke-width="0.800"/>
<rect x="957.500" y="513.500" width="6" height="6" fill="#8a8a8a" stroke="#c0c0c0" stroke-width="1"/>
</g>
</svg>
<div class="a" style="left:991px;top:506px;width:9px;height:16px;background:#3c3c3c;border-radius:1px"></div>
<div class="a" style="left:992px;top:507px;width:7px;height:7px;background:linear-gradient(#8a8a8a,#6a6a6a)"></div>
<div class="a" style="left:767px;top:526px;width:246px;height:1px;background:#3e3e3e"></div>
<div class="a" style="left:767px;top:527px;width:246px;height:1px;background:#5d5d5d"></div>
<!-- blend row -->
<div class="drop" style="left:771px;top:531px;width:109px;height:20px"></div>
<div class="t" style="left:779px;top:534px;color:#f4f4f4">正常</div>
<svg style="left:870px;top:536px" width="6" height="10" viewBox="0 0 6 10"><path d="M0 4h6L3 0.500zM0 6h6L3 9.500z" fill="#eee"/></svg>
<div class="t" style="left:888px;top:534px;color:#f0f0f0">不透明度:</div>
<div class="a" style="left:945px;top:531px;width:35px;height:20px;background:#343434;border:1px solid #2c2c2c;border-right:0;border-radius:2px 0 0 2px"></div>
<div class="t" style="left:948px;top:534px;color:#fff;font-size:11px">100%</div>
<div class="a" style="left:980px;top:531px;width:20px;height:20px;border:1px solid #2f2f2f;border-radius:0 3px 3px 0;background:linear-gradient(#727272,#5e5e5e)"></div>
<svg style="left:987px;top:540px" width="6" height="3.500" viewBox="0 0 7 4"><path d="M0 0h7L3.500 4z" fill="#eee"/></svg>
<div class="a" style="left:767px;top:554px;width:246px;height:1px;background:#3e3e3e"></div>
<div class="a" style="left:767px;top:555px;width:246px;height:1px;background:#5d5d5d"></div>
<!-- lock row -->
<div class="t" style="left:773px;top:561px;color:#f0f0f0">锁定:</div>
<svg id="lockicons" style="left:806px;top:558px" width="90" height="22" viewBox="806 558 90 22">
<rect x="810" y="564" width="11" height="11" fill="#9c9c9c"/>
<g fill="#6c6c6c"><rect x="810" y="564" width="3.700" height="3.700"/><rect x="817.300" y="564" width="3.700" height="3.700"/><rect x="813.700" y="567.700" width="3.600" height="3.600"/><rect x="810" y="571.300" width="3.700" height="3.700"/><rect x="817.300" y="571.300" width="3.700" height="3.700"/></g>
<path d="M847 562.200l-1.800-1.200-9.200 9.800 2.600 2.200z" fill="#969696"/>
<path d="M836 570.300c-2.800 0.600-3.400 3.200-7.600 4.200 3.600 2.200 9.600 1.400 11-2.200z" fill="#969696"/>
<g fill="#c4c4c4"><path d="M859 562l3 3.300h-2.200v3h3v-2.200l3.300 3-3.300 3v-2.200h-3v3h2.200l-3 3.300-3-3.300h2.200v-3h-3v2.200l-3.300-3 3.300-3v2.200h3v-3h-2.200z"/></g>
<rect x="876.500" y="568" width="10" height="7.500" rx="1" fill="#c4c4c4"/>
<path d="M878.500 568v-2.300a3 3 0 0 1 6 0v2.300" fill="none" stroke="#c4c4c4" stroke-width="1.600"/>
<rect x="880.700" y="570" width="1.600" height="3" fill="#555"/>
</svg>
<div class="t" style="left:911px;top:562px;color:#f0f0f0">填充:</div>
<div class="a" style="left:945px;top:559px;width:35px;height:20px;background:#343434;border:1px solid #2c2c2c;border-right:0;border-radius:2px 0 0 2px"></div>
<div class="t" style="left:948px;top:562px;color:#fff;font-size:11px">100%</div>
<div class="a" style="left:980px;top:559px;width:20px;height:20px;border:1px solid #2f2f2f;border-radius:0 3px 3px 0;background:linear-gradient(#727272,#5e5e5e)"></div>
<svg style="left:987px;top:568px" width="6" height="3.500" viewBox="0 0 7 4"><path d="M0 0h7L3.500 4z" fill="#eee"/></svg>
<div class="a" style="left:767px;top:583px;width:246px;height:1px;background:#3c3c3c"></div>
<!-- layer rows -->
<div class="a" style="left:767px;top:584px;width:233px;height:119px;background:#535353"></div>
<div class="a" style="left:798px;top:623px;width:202px;height:38px;background:#54637a"></div>
<div class="a" style="left:767px;top:622px;width:233px;height:1px;background:#3e3e3e"></div>
<div class="a" style="left:767px;top:660px;width:233px;height:1px;background:#3e3e3e"></div>
<div class="a" style="left:767px;top:698px;width:233px;height:1px;background:#3e3e3e"></div>
<div class="a" style="left:797px;top:584px;width:1px;height:119px;background:#424242"></div>
<!-- eyes -->
<svg class="eye" style="left:776px;top:598px" width="13" height="9" viewBox="0 0 15 10"><path d="M0.500 5c3.500-5.500 10.500-5.500 14 0-3.500 5.500-10.500 5.500-14 0z" fill="#a9a9a9"/><circle cx="7.500" cy="4.800" r="3" fill="#565656"/><circle cx="7.500" cy="4.800" r="1.500" fill="#8a8a8a"/></svg>
<svg class="eye" style="left:776px;top:636px" width="13" height="9" viewBox="0 0 15 10"><path d="M0.500 5c3.500-5.500 10.500-5.500 14 0-3.500 5.500-10.500 5.500-14 0z" fill="#a9a9a9"/><circle cx="7.500" cy="4.800" r="3" fill="#565656"/><circle cx="7.500" cy="4.800" r="1.500" fill="#8a8a8a"/></svg>
<svg class="eye" style="left:776px;top:674px" width="13" height="9" viewBox="0 0 15 10"><path d="M0.500 5c3.500-5.500 10.500-5.500 14 0-3.500 5.500-10.500 5.500-14 0z" fill="#a9a9a9"/><circle cx="7.500" cy="4.800" r="3" fill="#565656"/><circle cx="7.500" cy="4.800" r="1.500" fill="#8a8a8a"/></svg>
<!-- row1 -->
<div class="a chk" style="left:800px;top:587px;width:24px;height:33px"></div>
<div class="t" style="left:833px;top:597px;color:#f4f4f4">椭圆 2 副本</div>
<!-- row2 -->
<svg style="left:803px;top:636px" width="10" height="10" viewBox="0 0 10 10"><path d="M8.500 1.500h-4v6" fill="none" stroke="#e4e4e4" stroke-width="1.300"/><path d="M1.800 5.500h5.400l-2.700 3.500z" fill="#e4e4e4"/></svg>
<svg style="left:824px;top:635px" width="17" height="14" viewBox="0 0 17 14"><defs><linearGradient id="hs2" x1="0" y1="0" x2="1" y2="0"><stop offset="0" stop-color="#20242a"/><stop offset="1" stop-color="#c4c8cc"/></linearGradient></defs><rect x="0.500" y="0.500" width="16" height="13" fill="#a8acb0" stroke="#c4c8ce" stroke-width="1"/><rect x="4" y="1" width="2" height="5" fill="#5a5e66"/><rect x="8" y="1" width="1.500" height="5" fill="#5a5e66"/><rect x="11.500" y="1" width="2" height="5" fill="#5a5e66"/><rect x="1" y="6.500" width="15" height="6.500" fill="url(#hs2)"/></svg>
<svg style="left:850px;top:634px" width="8" height="16" viewBox="0 0 8 16"><rect x="1.500" y="1" width="5" height="7" rx="2.500" fill="none" stroke="#d0d6de" stroke-width="1.300"/><rect x="1.500" y="8" width="5" height="7" rx="2.500" fill="none" stroke="#d0d6de" stroke-width="1.300"/><path d="M4 5v6" stroke="#d0d6de" stroke-width="1.300"/></svg>
<div class="a" style="left:863px;top:626px;width:24px;height:32px;background:#fff;border:1px solid #2a2a2a;border-right-width:2px;border-bottom-width:2px"></div>
<svg style="left:860px;top:624px" width="29" height="37" viewBox="0 0 29 37"><path d="M0.500 6v-5.500h5.500M23 0.500h5.500v5.500M28.500 31v5.500h-5.500M6 36.500h-5.500v-5.500" fill="none" stroke="#e8eef6" stroke-width="1.200"/></svg>
<div class="t" style="left:896px;top:635px;color:#f6f6f6">色相/饱和度 1</div>
<!-- row3 -->
<div class="a chk" style="left:800px;top:664px;width:24px;height:33px"></div>
<div class="a" style="left:806px;top:679.500px;width:12px;height:1.500px;background:#94d8ee"></div>
<div class="t" style="left:833px;top:674px;color:#f4f4f4;text-decoration:underline">椭圆 1副本&nbsp;&nbsp;</div>
<!-- layers scrollbar -->
<div class="a" style="left:999px;top:584px;width:14px;height:119px;background:#414141"></div>
<svg style="left:1003px;top:591px" width="7" height="4" viewBox="0 0 7 4"><path d="M0 4h7L3.500 0z" fill="#e6e6e6"/></svg>
<div class="a" style="left:1001px;top:603px;width:12px;height:110px;border-radius:4px;background:linear-gradient(90deg,#8c8c8c,#747474 60%,#686868)"></div>
<!-- watermark -->
<div class="a" id="wm" style="left:915px;top:659px;width:100px;height:44px;background:#f3f3f3;z-index:60"></div>
<svg style="left:915px;top:659px;z-index:61" width="100" height="44" viewBox="916 659 100 44">
<path d="M938.600 673.600a10.500 10.500 0 1 0 1.400 14.600" fill="none" stroke="#ababab" stroke-width="3.300"/>
<path d="M921.500 675.300h5.600l3.200 3.900c3.200-3.600 8-6.200 14.200-7.200-5 2.200-9 5.600-11.600 9.500l5.800 7.300h-5.600l-3.400-4.400-3.800 4.400h-5.200l6.300-7.500z" fill="#ababab"/>
</svg>
<div class="t" style="left:947px;top:670px;font-size:15px;line-height:20px;color:#a2a2a2;font-weight:bold;letter-spacing:1.300px;z-index:61">创新互联</div>
<div class="t" style="left:946px;top:688px;font-size:5px;line-height:6px;color:#b0b0b0;letter-spacing:0.150px;z-index:61;transform:scaleX(1.210);transform-origin:0 0">CHUANG XIN HU LIAN</div>

</body>
</html>
